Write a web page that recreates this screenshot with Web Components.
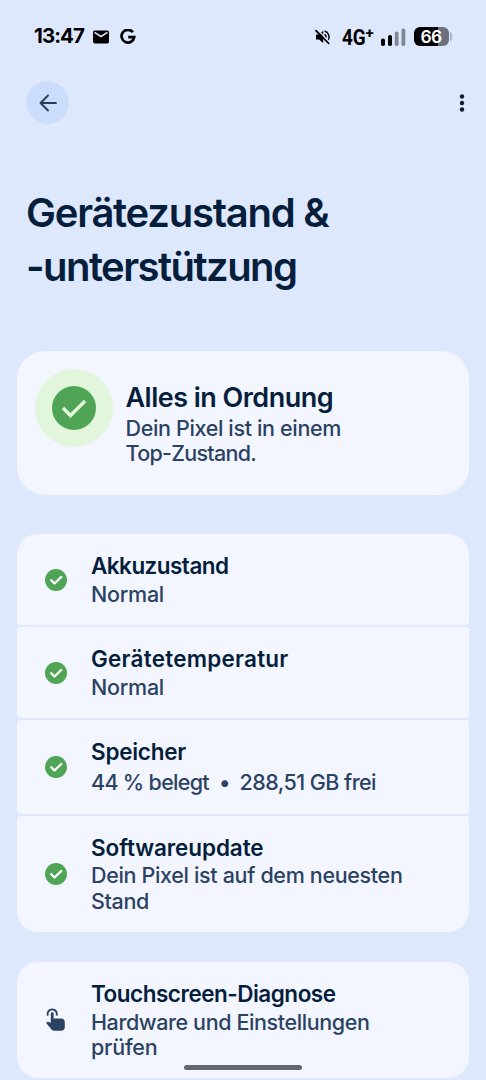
<!DOCTYPE html>
<html lang="de">
<head>
<meta charset="utf-8">
<title>Gerätezustand</title>
<style>
html,body{margin:0;height:100%;overflow:hidden;background:#dde8fd}
body{font-family:Inter,"Open Sans",sans-serif;color:#041e3c}
</style>
</head>
<body>
<health-screen></health-screen>
<script>
const define = (name, html, setup) => customElements.define(name, class extends HTMLElement {
  connectedCallback() {
    if (this.shadowRoot) return;
    const t = document.createElement('template');
    t.innerHTML = html;
    this.attachShadow({ mode: 'open' }).append(t.content.cloneNode(true));
    if (setup) setup(this);
  }
});

// One line of text, tracked so that it takes the given width.
define('fit-text', `<style>:host{display:block;white-space:pre;width:max-content}</style><span><slot></slot></span>`, el => {
  const natural = el.shadowRoot.querySelector('span').getBoundingClientRect().width;
  const n = el.textContent.length;
  el.style.letterSpacing = ((+el.getAttribute('w') - natural) / n).toFixed(3) + 'px';
});

define('status-bar', `<style>
:host{display:flex;height:73px;box-sizing:border-box;padding:0 34px;align-items:center;color:#000}
svg{display:block;flex:none}
.time{font-size:20.5px;font-weight:700;line-height:24px;margin-top:-1px}
.mail{margin-left:9.5px}.g{margin-left:11px}
.grow{flex:1}
.net{display:flex;width:32px;margin-left:11px;font-family:Roboto,sans-serif;font-weight:700;line-height:24px}
.net b{display:block;width:24px;font-size:22.5px;font-weight:700;transform:scaleX(.84);transform-origin:0 50%;margin-top:1px}.net i{font:700 15px/18px Roboto,sans-serif}
.sig{margin-left:7px}
.bat{margin-left:8px;width:35px;height:19px;border-radius:6px;background:linear-gradient(90deg,#000 68%,#6c717d 68%);color:#fff;font-size:17.5px;font-weight:600;line-height:19px;display:flex;justify-content:center}
.nub{width:2.5px;height:9px;margin-left:1px;border-radius:0 2px 2px 0;background:#aab3c6}
</style>
<fit-text class="time" w="50">13:47</fit-text>
<svg class="mail" width="16" height="14" viewBox="0 0 16 14"><rect y=".5" width="16" height="13" rx="1.7"/><path d="M1.5 2.4 8 6.5l6.500-4.100" fill="none" stroke="#dde8fd" stroke-width="1.500"/></svg>
<svg class="g" width="16" height="16" viewBox="0 0 16 16"><path d="M12.900 3.200A6.350 6.350 0 1 0 14.200 8.200H8.200" fill="none" stroke="#000" stroke-width="2.700"/></svg>
<span class="grow"></span>
<svg width="16" height="16" viewBox="0 0 16 16"><path d="M1 5.500h3L8.200 1.800V14L4 10.500H1z"/><path d="M9.500 2.100A6 6 0 0 1 12.900 11.500M9.500 5.300A3 3 0 0 1 10.700 9" fill="none" stroke="#000" stroke-width="1.500"/><path d="M2.200.5 16 14.300" stroke="#dde8fd" stroke-width="1.300"/><path d="m.5 1.200 13.800 13.800" stroke="#000" stroke-width="1.700"/></svg>
<span class="net"><b>4G</b><i>+</i></span>
<svg class="sig" width="25" height="18" viewBox="0 0 25 18"><rect y="10.500" width="4" height="7.500" rx="1.800"/><rect x="7" y="7" width="4" height="11" rx="1.800"/><g fill="#7f8795"><rect x="13.800" y="3.500" width="3.800" height="14.500" rx="1.800"/><rect x="20.500" y=".5" width="3.800" height="17.500" rx="1.800"/></g></svg>
<span class="bat"><fit-text w="21">66</fit-text></span><span class="nub"></span>`);

define('app-bar', `<style>
:host{display:flex;justify-content:space-between;align-items:center;height:44px;margin-top:7.500px;padding:0 21px 0 26px}
.back{width:43px;height:43px;border-radius:50%;background:#ccddfb;display:grid;place-items:center}
svg{display:block}
</style>
<div class="back"><svg width="18" height="18" viewBox="0 0 18 18" fill="none" stroke="#2a3d5c" stroke-width="1.900" stroke-linecap="round" stroke-linejoin="round"><path d="M17 9H1.500M9 1.500 1.500 9 9 16.500"/></svg></div>
<svg width="6" height="18" viewBox="0 0 6 18" fill="#111d2d"><circle cx="3" cy="2.500" r="2.200"/><circle cx="3" cy="9" r="2.200"/><circle cx="3" cy="15.500" r="2.200"/></svg>`);

define('check-badge', `<style>
:host{display:block;width:22px;height:22px}svg{display:block}
:host([large]){width:78px;height:78px;border-radius:50%;background:#e1f6da;display:grid;place-items:center}
</style><svg></svg>`, el => {
  const big = el.hasAttribute('large'), s = el.shadowRoot.querySelector('svg');
  s.setAttribute('width', big ? 44 : 22); s.setAttribute('height', big ? 44 : 22);
  s.setAttribute('viewBox', '0 0 44 44');
  s.innerHTML = `<circle cx="22" cy="22" r="22" fill="#4fa455"/>` + (big
    ? '<path d="m11 22 7.500 7.500L33 15" fill="none" stroke="#e1f6da" stroke-width="3.500"/>'
    : '<path d="m12.500 22.500 6.500 6.500L32.500 16" fill="none" stroke="#fff" stroke-width="4.800" stroke-linecap="round" stroke-linejoin="round"/>');
});

define('touch-icon', `<style>:host{display:block;width:22px;height:24px}svg{display:block}</style>
<svg width="22" height="24" viewBox="0 0 22 24"><path d="M2.800 7.700A4.700 4.700 0 1 1 11.600 7.700" fill="none" stroke="#2b4263" stroke-width="1.900"/><path d="M5.800 5.600a1.400 1.400 0 0 1 2.800 0V10.500h7.400a3.800 3.800 0 0 1 3.800 3.800V19a3.800 3.800 0 0 1-3.800 3.800H9.500a4 4 0 0 1-3-1.300L1.200 15.100l.7-.8c.5-.6 1-.6 1.600-.4l2.300.8z" fill="#2b4263"/></svg>`);

define('status-card', `<style>
:host{display:flex;height:144px;box-sizing:border-box;padding:17.5px 17.500px;border-radius:28px;background:#f3f6fe}
.t{margin-left:13px;padding-top:11.500px}
::slotted([slot=title]){font-size:27px;font-weight:600;line-height:35px}
::slotted([slot=sub]){font-size:21.500px;font-weight:450;line-height:25.300px;color:#2b4263;padding-top:.2px}
</style><check-badge large></check-badge><div class="t"><slot name="title"></slot><slot name="sub"></slot></div>`);

define('list-row', `<style>
:host{display:flex;box-sizing:border-box;padding-left:28px;border-radius:3.500px;background:#f3f6fe;align-items:center}
.t{align-self:flex-start;margin-left:24px;padding-top:17px}
.icon{width:22px}
::slotted([slot=title]){font-size:22.500px;font-weight:600;line-height:30.500px}
::slotted([slot=sub]){font-size:21.500px;font-weight:450;line-height:25.300px;color:#2b4263}
</style><div class="icon"><slot name="icon"><check-badge></check-badge></slot></div><div class="t"><slot name="title"></slot><slot name="sub"></slot></div>`);

define('row-group', `<style>:host{display:flex;flex-direction:column;gap:2px;border-radius:21px;overflow:hidden}</style><slot></slot>`);

define('health-screen', `<style>
:host{display:flow-root;position:relative;height:1080px;overflow:hidden}
h1{margin:61.200px 26px 0;font-size:40px;font-weight:600;line-height:54px}
main{margin:0 17.500px 0 17px}
status-card{margin-top:57.800px}
.a{margin-top:39px}.b{margin-top:30.500px}
.bar{position:absolute;left:184px;top:1064.500px;width:118px;height:5px;border-radius:3px;background:#65666c}
.mem{display:flex;padding-top:2.500px}
</style>
<status-bar></status-bar><app-bar></app-bar>
<h1><fit-text w="302.500">Gerätezustand &amp;</fit-text><fit-text w="270.500">-unterstützung</fit-text></h1>
<main>
<status-card><fit-text slot="title" w="207.500">Alles in Ordnung</fit-text><fit-text slot="sub" w="215.500">Dein Pixel ist in einem</fit-text><fit-text slot="sub" w="130.500">Top-Zustand.</fit-text></status-card>
<row-group class="a">
<list-row style="height:91px"><fit-text slot="title" w="137.500">Akkuzustand</fit-text><fit-text slot="sub" w="73">Normal</fit-text></list-row>
<list-row style="height:91px"><fit-text slot="title" w="197.500">Gerätetemperatur</fit-text><fit-text slot="sub" w="73">Normal</fit-text></list-row>
<list-row style="height:93.500px"><fit-text slot="title" w="95">Speicher</fit-text><div slot="sub" class="mem"><fit-text w="118">44 % belegt</fit-text><fit-text w="30.500">  •  </fit-text><fit-text w="136.500">288,51 GB frei</fit-text></div></list-row>
<list-row style="height:116px"><fit-text slot="title" w="172.500">Softwareupdate</fit-text><fit-text slot="sub" w="311.500">Dein Pixel ist auf dem neuesten</fit-text><fit-text slot="sub" w="58">Stand</fit-text></list-row>
</row-group>
<row-group class="b">
<list-row style="height:116px"><touch-icon slot="icon"></touch-icon><fit-text slot="title" w="244.500">Touchscreen-Diagnose</fit-text><fit-text slot="sub" w="278.500">Hardware und Einstellungen</fit-text><fit-text slot="sub" w="66.500">prüfen</fit-text></list-row>
</row-group>
</main>
<div class="bar"></div>`);
</script>
</body>
</html>
